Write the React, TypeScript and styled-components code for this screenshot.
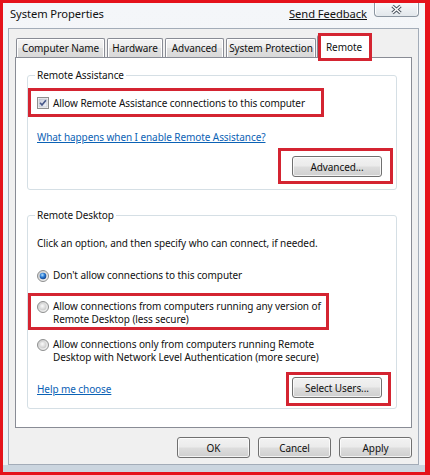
import React from 'react';
import styled, { createGlobalStyle } from 'styled-components';

const FONT = `"Noto Sans", "Liberation Sans", Arial, sans-serif`;
const MARK_RED = '#d42431';

const GlobalStyle = createGlobalStyle`
  html, body { margin: 0; padding: 0; background: #ffffff; }
  *, *::before, *::after { box-sizing: border-box; }
`;

const Screen = styled.div`
  width: 430px;
  height: 475px;
  border: 3px solid #e5121b;
  border-right-width: 5px;
  display: flex;
  flex-direction: column;
  background: linear-gradient(#f4f6f9, #eef1f5 calc(100% - 7px), #cbd5df calc(100% - 7px));
  font-family: ${FONT};
  font-size: 10px;
  letter-spacing: -0.08px;
  color: #111;
  overflow: hidden;
`;

const TitleBar = styled.div`
  height: 25px;
  flex: none;
  display: flex;
  align-items: flex-start;
  padding-left: 7px;
`;

const Title = styled.div`
  margin-top: 4px;
  font-size: 11.2px;
  line-height: 14px;
  color: #111;
`;

const Feedback = styled.a`
  margin-left: auto;
  margin-top: 4px;
  font-size: 11.2px;
  line-height: 14px;
  color: #111;
  text-decoration: underline;
  text-underline-offset: 1px;
  cursor: pointer;
`;

const CloseBtn = styled.div`
  width: 45px;
  height: 14px;
  margin: 0 6px 0 7px;
  border: 1px solid #8b95a1;
  border-top: none;
  border-radius: 0 0 4px 4px;
  background: linear-gradient(#f7f8fa, #e2e7ec);
  box-shadow: inset 1px 0 0 #fff, inset -1px 0 0 #fff;
  display: flex;
  align-items: center;
  justify-content: center;
`;

const Client = styled.div`
  flex: 1;
  min-height: 0;
  margin: 0 6px 7px 5px;
  border: 1px solid #a3acb8;
  background: #f0f0f0;
  padding: 6px;
  display: flex;
  flex-direction: column;
`;

const TabRow = styled.div`
  flex: none;
  height: 22px;
  display: flex;
  align-items: flex-end;
  gap: 2px;
  padding-left: 1px;
  position: relative;
  z-index: 1;
`;

const Tab = styled.div<{ $w: number; $active?: boolean }>`
  position: relative;
  z-index: ${p => (p.$active ? 2 : 1)};
  width: ${p => p.$w}px;
  height: ${p => (p.$active ? 23 : 19)}px;
  margin-bottom: ${p => (p.$active ? -1 : 0)}px;
  margin-left: ${p => (p.$active ? -1 : 0)}px;
  border: 1px solid #898c95;
  border-bottom: none;
  border-radius: 2px 2px 0 0;
  background: ${p =>
    p.$active ? '#ffffff' : 'linear-gradient(#f4f4f4, #ececec 50%, #e0e0e0 50%, #d9d9d9)'};
  box-shadow: ${p => (p.$active ? 'none' : 'inset 1px 1px 0 #fff, inset -1px 0 0 #fff')};
  display: flex;
  align-items: center;
  justify-content: center;
  line-height: 14px;
  white-space: nowrap;
`;

const TabMark = styled.span`
  position: absolute;
  left: 0;
  right: -2px;
  top: -3px;
  bottom: -3px;
  border: 3px solid ${MARK_RED};
  pointer-events: none;
`;

const Panel = styled.div`
  flex: 1;
  min-height: 0;
  background: #ffffff;
  border: 1px solid #898c95;
  padding: 10px 14px 0 11px;
  display: flex;
  flex-direction: column;
`;

const Group = styled.fieldset<{ $mt?: number; $pb: number }>`
  margin: ${p => p.$mt ?? 0}px 0 0 0;
  padding: 0 9px ${p => p.$pb}px 9px;
  border: 1px solid #d5dfe5;
  border-radius: 3px;
  box-shadow: inset 1px 1px 0 #fff;
  min-width: 0;
`;

const Legend = styled.legend`
  padding: 0 2px;
  margin-left: -2px;
  line-height: 14px;
  color: #111;
`;

const Mark = styled.div<{ $w?: number; $mt?: number; $ml?: number; $mr?: number; $pad: string }>`
  border: 3px solid ${MARK_RED};
  width: ${p => (p.$w ? `${p.$w}px` : 'auto')};
  margin: ${p => p.$mt ?? 0}px ${p => p.$mr ?? 0}px 0 ${p => p.$ml ?? 0}px;
  padding: ${p => p.$pad};
`;

const CheckRow = styled.label`
  display: flex;
  align-items: center;
  gap: 4px;
  height: 23px;
  line-height: 14px;
  white-space: nowrap;
`;

const LinkLine = styled.div<{ $mt: number }>`
  margin-top: ${p => p.$mt}px;
  line-height: 14px;
`;

const Link = styled.a`
  color: #0b62b5;
  text-decoration: underline;
  text-underline-offset: 1px;
  cursor: pointer;
  white-space: nowrap;
`;

const RightRow = styled.div<{ $mt: number }>`
  display: flex;
  justify-content: flex-end;
  margin-top: ${p => p.$mt}px;
`;

const SplitRow = styled.div<{ $mt: number }>`
  display: flex;
  justify-content: space-between;
  align-items: center;
  margin-top: ${p => p.$mt}px;
`;

const Description = styled.div<{ $mt: number }>`
  margin-top: ${p => p.$mt}px;
  line-height: 14px;
  white-space: nowrap;
`;

const OptionRow = styled.label<{ $mt?: number }>`
  display: flex;
  align-items: flex-start;
  gap: 4px;
  margin-top: ${p => p.$mt ?? 0}px;
  line-height: 13px;
  white-space: nowrap;
  & > svg {
    flex: none;
    margin-top: 1px;
  }
`;

const Button = styled.button<{ $w: number }>`
  width: ${p => p.$w}px;
  height: 21px;
  padding: 0;
  border: 1px solid #707070;
  border-radius: 3px;
  background: linear-gradient(#f2f2f2, #ebebeb 48%, #dddddd 52%, #cfcfcf);
  box-shadow: inset 0 0 0 1px rgba(255, 255, 255, 0.75);
  font-family: ${FONT};
  font-size: 10px;
  letter-spacing: -0.08px;
  line-height: 14px;
  color: #111;
  display: block;
  cursor: default;
`;

const Footer = styled.div`
  flex: none;
  display: flex;
  justify-content: flex-end;
  gap: 8px;
  margin-top: 9px;
`;

const CloseGlyph = () => (
  <svg width="13" height="11" viewBox="0 0 13 11">
    <path d="M2.5 2 L10.5 9 M10.5 2 L2.5 9" stroke="#4a535e" strokeWidth="3.4" />
    <path d="M2.5 2 L10.5 9 M10.5 2 L2.5 9" stroke="#ffffff" strokeWidth="1.4" />
  </svg>
);

const CheckBox = () => (
  <svg width="12" height="12" viewBox="0 0 12 12">
    <defs>
      <linearGradient id="cbFill" x1="0" y1="0" x2="1" y2="1">
        <stop offset="0" stopColor="#c8cdda" />
        <stop offset="1" stopColor="#f5f6fa" />
      </linearGradient>
    </defs>
    <rect x="0.5" y="0.5" width="11" height="11" fill="#f8f8f8" stroke="#8e8f8f" />
    <rect x="2" y="2" width="8" height="8" fill="url(#cbFill)" stroke="#b3b8c4" strokeWidth="0.6" />
    <path d="M3.1 5.8 L5 8 L8.9 3.3" fill="none" stroke="#48598a" strokeWidth="1.7" />
  </svg>
);

const Radio = ({ checked }: { checked?: boolean }) => (
  <svg width="12" height="12" viewBox="0 0 12 12">
    <defs>
      <linearGradient id="rdRing" x1="0" y1="0" x2="1" y2="1">
        <stop offset="0" stopColor="#c9c9c9" />
        <stop offset="1" stopColor="#f7f7f7" />
      </linearGradient>
      <radialGradient id="rdOn" cx="0.4" cy="0.35" r="0.75">
        <stop offset="0" stopColor="#b4e2ff" />
        <stop offset="0.45" stopColor="#2c7bd4" />
        <stop offset="1" stopColor="#0c3475" />
      </radialGradient>
      <radialGradient id="rdOff" cx="0.4" cy="0.35" r="0.75">
        <stop offset="0" stopColor="#fbfbfb" />
        <stop offset="1" stopColor="#c4c4c4" />
      </radialGradient>
    </defs>
    <circle cx="6" cy="6" r="5.5" fill="url(#rdRing)" stroke="#8e8f8f" />
    <circle cx="6" cy="6" r="3.3" fill={checked ? 'url(#rdOn)' : 'url(#rdOff)'} />
  </svg>
);

const tabs = [
  { label: 'Computer Name', w: 89 },
  { label: 'Hardware', w: 56 },
  { label: 'Advanced', w: 59 },
  { label: 'System Protection', w: 90 },
  { label: 'Remote', w: 54, active: true },
];

export default function App() {
  return (
    <>
      <GlobalStyle />
      <Screen>
        <TitleBar>
          <Title>System Properties</Title>
          <Feedback>Send Feedback</Feedback>
          <CloseBtn>
            <CloseGlyph />
          </CloseBtn>
        </TitleBar>
        <Client>
          <TabRow>
            {tabs.map(t => (
              <Tab key={t.label} $w={t.w} $active={t.active}>
                {t.label}
                {t.active && <TabMark />}
              </Tab>
            ))}
          </TabRow>
          <Panel>
            <Group $pb={5}>
              <Legend>Remote Assistance</Legend>
              <Mark $w={296} $mt={6} $ml={-9} $pad="0 6px">
                <CheckRow>
                  <CheckBox />
                  Allow Remote Assistance connections to this computer
                </CheckRow>
              </Mark>
              <LinkLine $mt={13}>
                <Link>What happens when I enable Remote Assistance?</Link>
              </LinkLine>
              <RightRow $mt={4}>
                <Mark $mr={-6} $pad="5px 8px 4px 11px">
                  <Button $w={90}>Advanced...</Button>
                </Mark>
              </RightRow>
            </Group>
            <Group $mt={18} $pb={2}>
              <Legend>Remote Desktop</Legend>
              <Description $mt={14}>
                Click an option, and then specify who can connect, if needed.
              </Description>
              <OptionRow $mt={19}>
                <Radio checked />
                <span>Don't allow connections to this computer</span>
              </OptionRow>
              <Mark $w={301} $mt={11} $ml={-9} $pad="4px 0 1px 6px">
                <OptionRow>
                  <Radio />
                  <span>
                    Allow connections from computers running any version of
                    <br />
                    Remote Desktop (less secure)
                  </span>
                </OptionRow>
              </Mark>
              <OptionRow $mt={8}>
                <Radio />
                <span>
                  Allow connections only from computers running Remote
                  <br />
                  Desktop with Network Level Authentication (more secure)
                </span>
              </OptionRow>
              <SplitRow $mt={8}>
                <Link>Help me choose</Link>
                <Mark $mr={-4} $pad="2px 6px 5px 3px">
                  <Button $w={90}>Select Users...</Button>
                </Mark>
              </SplitRow>
            </Group>
          </Panel>
          <Footer>
            <Button $w={73}>OK</Button>
            <Button $w={73}>Cancel</Button>
            <Button $w={73}>Apply</Button>
          </Footer>
        </Client>
      </Screen>
    </>
  );
}
